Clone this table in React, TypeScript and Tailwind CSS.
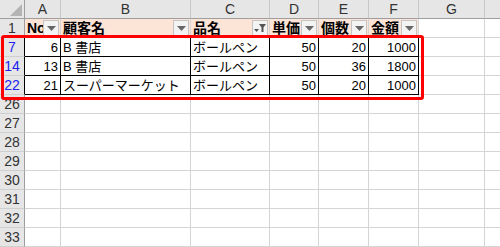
import React from 'react';

type Col = { key: string; width: string; label?: boolean };

const COLS: Col[] = [
  { key: 'A', width: 'w-[36px]', label: true },
  { key: 'B', width: 'w-[130px]', label: true },
  { key: 'C', width: 'w-[79px]', label: true },
  { key: 'D', width: 'w-[49px]', label: true },
  { key: 'E', width: 'w-[50px]', label: true },
  { key: 'F', width: 'w-[50px]', label: true },
  { key: 'G', width: 'w-[66px]', label: true },
  { key: 'H', width: 'w-[16px]' },
];

const HEADERS = ['No', '顧客名', '品名', '単価', '個数', '金額'];

const DATA: { row: number; cells: (string | number)[] }[] = [
  { row: 7, cells: [6, 'B 書店', 'ボールペン', 50, 20, 1000] },
  { row: 14, cells: [13, 'B 書店', 'ボールペン', 50, 36, 1800] },
  { row: 22, cells: [21, 'スーパーマーケット', 'ボールペン', 50, 20, 1000] },
];

const EMPTY_ROWS = [26, 27, 28, 29, 30, 31, 32, 33];

const font = { fontFamily: '"Liberation Sans", "Noto Sans CJK JP", sans-serif' };

const FilterButton: React.FC<{ active?: boolean }> = ({ active }) => (
  <div className="absolute right-[1px] bottom-[1px] w-[16px] h-[16px] bg-[#f3f3f3] border border-[#c4c4c4] flex items-center justify-center">
    {active ? (
      <svg width="14" height="10" viewBox="0 0 14 10">
        <path d="M1 6 L6 6 L3.5 9 Z" fill="#555" />
        <path d="M6 1 L13 1 L10.5 4.5 L10.5 9 L8.5 9 L8.5 4.5 Z" fill="#555" />
      </svg>
    ) : (
      <svg width="9" height="5" viewBox="0 0 9 5">
        <path d="M0 0 L9 0 L4.5 5 Z" fill="#666" />
      </svg>
    )}
  </div>
);

const RowHeader: React.FC<{ n: number | string; filtered?: boolean }> = ({ n, filtered }) => (
  <div
    className={`w-[25px] h-[19px] shrink-0 bg-[#e6e6e6] border-b border-[#cfcfcf] border-r flex items-end justify-center text-[14px] leading-[17px] ${
      filtered ? 'text-[#2222ee] border-r-black' : 'text-[#333] border-r-[#9e9e9e]'
    }`}
  >
    {n}
  </div>
);

export default function App() {
  return (
    <div className="relative w-[500px] h-[247px] overflow-hidden bg-white text-black" style={font}>
      {/* column letters */}
      <div className="flex">
        <div className="relative w-[25px] h-[19px] shrink-0 bg-[#e6e6e6] border-r border-b border-[#9e9e9e]">
          <svg className="absolute right-[2px] bottom-[2px]" width="12" height="12" viewBox="0 0 12 12">
            <path d="M12 0 L12 12 L0 12 Z" fill="#b4b4b4" />
          </svg>
        </div>
        {COLS.map((c) => (
          <div
            key={c.key}
            className={`${c.width} h-[19px] shrink-0 bg-[#e6e6e6] border-r border-r-[#c6c6c6] border-b border-b-[#9e9e9e] flex items-center justify-center text-[14px] text-[#333]`}
          >
            {c.label ? c.key : null}
          </div>
        ))}
      </div>

      {/* table header row */}
      <div className="flex">
        <RowHeader n={1} />
        {COLS.map((c, i) => (
          <div
            key={c.key}
            className={`relative ${c.width} h-[19px] shrink-0 border-r border-b border-[#d4d4d4] ${
              i < 6 ? 'bg-[#fce4d6]' : ''
            } flex items-end px-[2px] text-[14px] leading-[18px] font-bold`}
          >
            {i < 6 && (
              <>
                <span>{HEADERS[i]}</span>
                <FilterButton active={i === 2} />
              </>
            )}
          </div>
        ))}
      </div>

      {/* filtered rows */}
      {DATA.map((d) => (
        <div key={d.row} className="flex">
          <RowHeader n={d.row} filtered />
          {COLS.map((c, i) => {
            const v = i < 6 ? d.cells[i] : '';
            const isNum = typeof v === 'number';
            return (
              <div
                key={c.key}
                className={`${c.width} h-[19px] shrink-0 border-r border-b ${
                  i < 6 ? 'border-black' : 'border-[#d4d4d4]'
                } flex items-end px-[2px] text-[13px] leading-[17px] whitespace-nowrap overflow-hidden ${
                  isNum ? 'justify-end' : 'justify-start'
                }`}
              >
                {v}
              </div>
            );
          })}
        </div>
      ))}

      {/* remaining empty rows */}
      {EMPTY_ROWS.map((r) => (
        <div key={r} className="flex">
          <RowHeader n={r} />
          {COLS.map((c) => (
            <div key={c.key} className={`${c.width} h-[19px] shrink-0 border-r border-b border-[#d4d4d4]`} />
          ))}
        </div>
      ))}

      {/* highlight around the filtered rows */}
      <div className="absolute left-[1px] top-[35px] w-[423px] h-[65px] border-[3px] border-[#ff0000] rounded-[3px] pointer-events-none" />
    </div>
  );
}
